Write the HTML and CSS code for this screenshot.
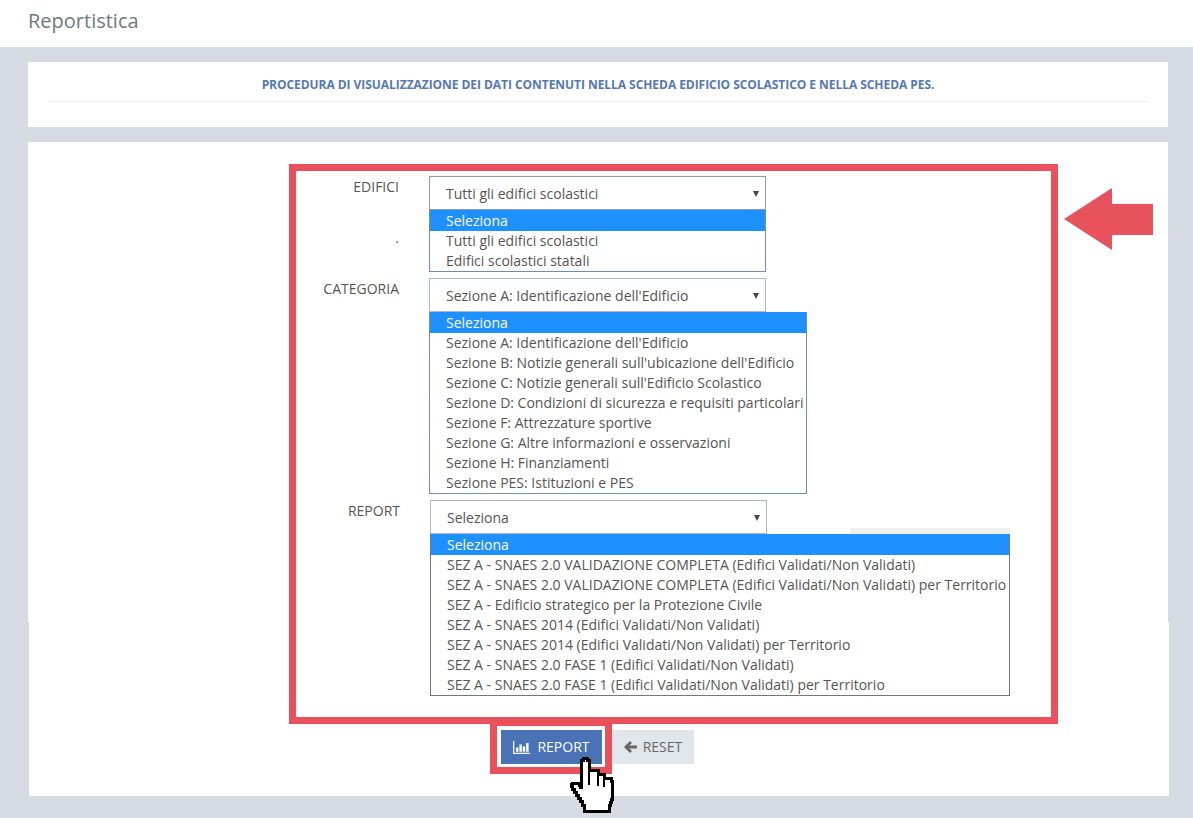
FILE: index.html
```html
<!DOCTYPE html>
<html lang="it">
<head>
<meta charset="utf-8">
<title>Reportistica</title>
<link rel="stylesheet" href="styles.css">
</head>
<body>
<header class="topbar"><h1 class="title">Reportistica</h1></header>
<main class="content">
  <section class="card intro">
    <p class="intro-text">PROCEDURA DI VISUALIZZAZIONE DEI DATI CONTENUTI NELLA SCHEDA EDIFICIO SCOLASTICO E NELLA SCHEDA PES.</p>
    <hr class="rule">
  </section>
  <section class="card panel">
    <div class="form-box">
      <div class="row">
        <div class="labels"><span class="label">EDIFICI</span><span class="dot">.</span></div>
        <div class="field w-a">
          <div class="select"><span>Tutti gli edifici scolastici</span><i class="caret"></i></div>
          <ul class="list">
            <li class="on">Seleziona</li>
            <li>Tutti gli edifici scolastici</li>
            <li>Edifici scolastici statali</li>
          </ul>
        </div>
      </div>
      <div class="row">
        <div class="labels"><span class="label">CATEGORIA</span></div>
        <div class="field w-b">
          <div class="select s-a"><span>Sezione A: Identificazione dell'Edificio</span><i class="caret"></i></div>
          <ul class="list">
            <li class="on">Seleziona</li>
            <li>Sezione A: Identificazione dell'Edificio</li>
            <li>Sezione B: Notizie generali sull'ubicazione dell'Edificio</li>
            <li>Sezione C: Notizie generali sull'Edificio Scolastico</li>
            <li>Sezione D: Condizioni di sicurezza e requisiti particolari</li>
            <li>Sezione F: Attrezzature sportive</li>
            <li>Sezione G: Altre informazioni e osservazioni</li>
            <li>Sezione H: Finanziamenti</li>
            <li>Sezione PES: Istituzioni e PES</li>
          </ul>
        </div>
      </div>
      <div class="row shifted">
        <div class="labels"><span class="label">REPORT</span></div>
        <div class="field w-c">
          <div class="select s-a"><span>Seleziona</span><i class="caret"></i></div>
          <div class="shade"></div>
          <ul class="list dark">
            <li class="on">Seleziona</li>
            <li>SEZ A - SNAES 2.0 VALIDAZIONE COMPLETA (Edifici Validati/Non Validati)</li>
            <li>SEZ A - SNAES 2.0 VALIDAZIONE COMPLETA (Edifici Validati/Non Validati) per Territorio</li>
            <li>SEZ A - Edificio strategico per la Protezione Civile</li>
            <li>SEZ A - SNAES 2014 (Edifici Validati/Non Validati)</li>
            <li>SEZ A - SNAES 2014 (Edifici Validati/Non Validati) per Territorio</li>
            <li>SEZ A - SNAES 2.0 FASE 1 (Edifici Validati/Non Validati)</li>
            <li>SEZ A - SNAES 2.0 FASE 1 (Edifici Validati/Non Validati) per Territorio</li>
          </ul>
        </div>
      </div>
    </div>
    <div class="actions">
      <div class="highlight">
        <button class="btn primary" type="button">
          <svg class="icon" viewBox="0 0 17 13" width="17" height="13" aria-hidden="true"><path fill="currentColor" d="M0 0h1.300v11.700H17V13H0zM3 6.500h2.400v4.200H3zM6.400 3.500h2.400v7.200H6.400zM9.800 5.500h2.400v5.200H9.800zM13.200 2h2.400v8.700h-2.400z"/></svg>
          <span>REPORT</span>
        </button>
      </div>
      <button class="btn ghost" type="button">
        <svg class="icon" viewBox="0 0 13 12" width="13" height="12" aria-hidden="true"><path fill="currentColor" d="M6 0l2 2-2.700 2.400H13v3.200H5.300L8 10l-2 2L0 6z"/></svg>
        <span>RESET</span>
      </button>
    </div>
    <svg class="arrow" viewBox="0 0 89 62" width="89" height="62" aria-hidden="true"><path fill="#e8525d" d="M0 31 48 0v16h41v31H48v15z"/></svg>
    <svg class="hand" viewBox="0 0 46 58" width="46" height="58" aria-hidden="true"><path fill="#fff" stroke="#000" stroke-width="3" shape-rendering="crispEdges" d="M11 3h2V1h4v2h2V13h9v4h6v4h7v3h1V42h-1v3h-1v3h-1v6H14v-6h-2v-4h-2v-3H8v-3H6v-3H4v-3H2v-3H1v-2h1v-1h7v2h1v2h1z"/><path fill="none" stroke="#000" stroke-width="2" shape-rendering="crispEdges" d="M19 13v15M28 17v12M34 21v9"/></svg>
  </section>
</main>
</body>
</html>
```
FILE: styles.css
```css
* { box-sizing: border-box; }
html, body { margin: 0; padding: 0; }
body {
  width: 1193px;
  height: 818px;
  overflow: hidden;
  background: #d5dae3;
  font-family: "Open Sans", "Liberation Sans", sans-serif;
  color: #555;
}
.topbar { height: 47px; background: #fff; padding: 8px 28px 0; }
.title { margin: 0; font-size: 20px; line-height: 26px; font-weight: 400; color: #6d7a80; }
.content { padding: 15px 24px 0 28px; display: flex; flex-direction: column; gap: 15px; }
.card { background: #fff; }
.intro { width: 1140px; height: 65px; padding: 14px 20px 0; }
.intro-text { margin: 0; height: 25px; font-size: 12px; line-height: 18px; font-weight: 700; letter-spacing: -0.05px; color: #5578b4; text-align: center; }
.rule { margin: 0; border: 0; border-top: 1px solid #eef0f3; }
.panel { position: relative; width: 1141px; height: 654px; padding: 22px 0 0 261px; }
.panel::before { content: ""; position: absolute; left: 0; top: 480px; bottom: 0; width: 1px; background: #d5dae3; }
.panel::after { content: ""; position: absolute; right: 0; top: 0; height: 480px; width: 1px; background: #d5dae3; }
.form-box { width: 769px; height: 560px; border: 7px solid #e9505c; padding: 5px 0 0 0; display: flex; flex-direction: column; gap: 6px; }
.row { display: flex; }
.shifted { padding-left: 1px; }
.labels { width: 103px; flex: none; display: flex; flex-direction: column; align-items: flex-end; font-size: 14px; line-height: 20px; color: #555; }
.label { padding-top: 1px; }
.dot { margin-top: 31px; }
.field { flex: none; position: relative; font-size: 14px; line-height: 20px; }
.w-a { width: 337px; margin-left: 30px; }
.w-b { width: 378px; margin-left: 30px; }
.w-c { width: 580px; margin-left: 30px; }
.select { position: relative; width: 337px; height: 34px; border: 1px solid #8c9bb0; padding: 7px 16px 0; background: #fff; color: #555; }
.s-a { border-color: #aeb7c4; }
.caret { position: absolute; right: 6px; top: 14px; width: 0; height: 0; border-left: 3.5px solid transparent; border-right: 3.5px solid transparent; border-top: 6px solid #444; }
.list { list-style: none; margin: 0; padding: 0; border: 1px solid #6f8db3; border-top: 0; background: #fff; color: #555; }
.dark { border-color: #767676; position: relative; }
.list li { height: 20px; padding: 0 16px; white-space: nowrap; }
.list .on { background: #1e90ff; color: #fff; height: 21px; padding-top: 1px; }
.shade { position: absolute; left: 420px; top: 28px; width: 160px; height: 6px; background: #f0f0f0; }
.actions { display: flex; align-items: flex-start; padding-left: 201px; }
.highlight { width: 122px; height: 50px; border: 7px solid #e9505c; border-top-width: 2px; padding: 4px 0 0 4px; }
.btn { height: 34px; border: 0; padding: 0; display: inline-flex; align-items: center; gap: 7px; font: 400 14px/18px "Open Sans", "Liberation Sans", sans-serif; }
.primary { width: 101px; background: #4a73b7; color: #fff; justify-content: center; }
.ghost { width: 82px; margin-top: 6px; gap: 6px; background: #e1e5ec; color: #666; justify-content: center; }
.arrow { position: absolute; left: 1036px; top: 46px; }
.hand { position: absolute; left: 542px; top: 615px; }
```
